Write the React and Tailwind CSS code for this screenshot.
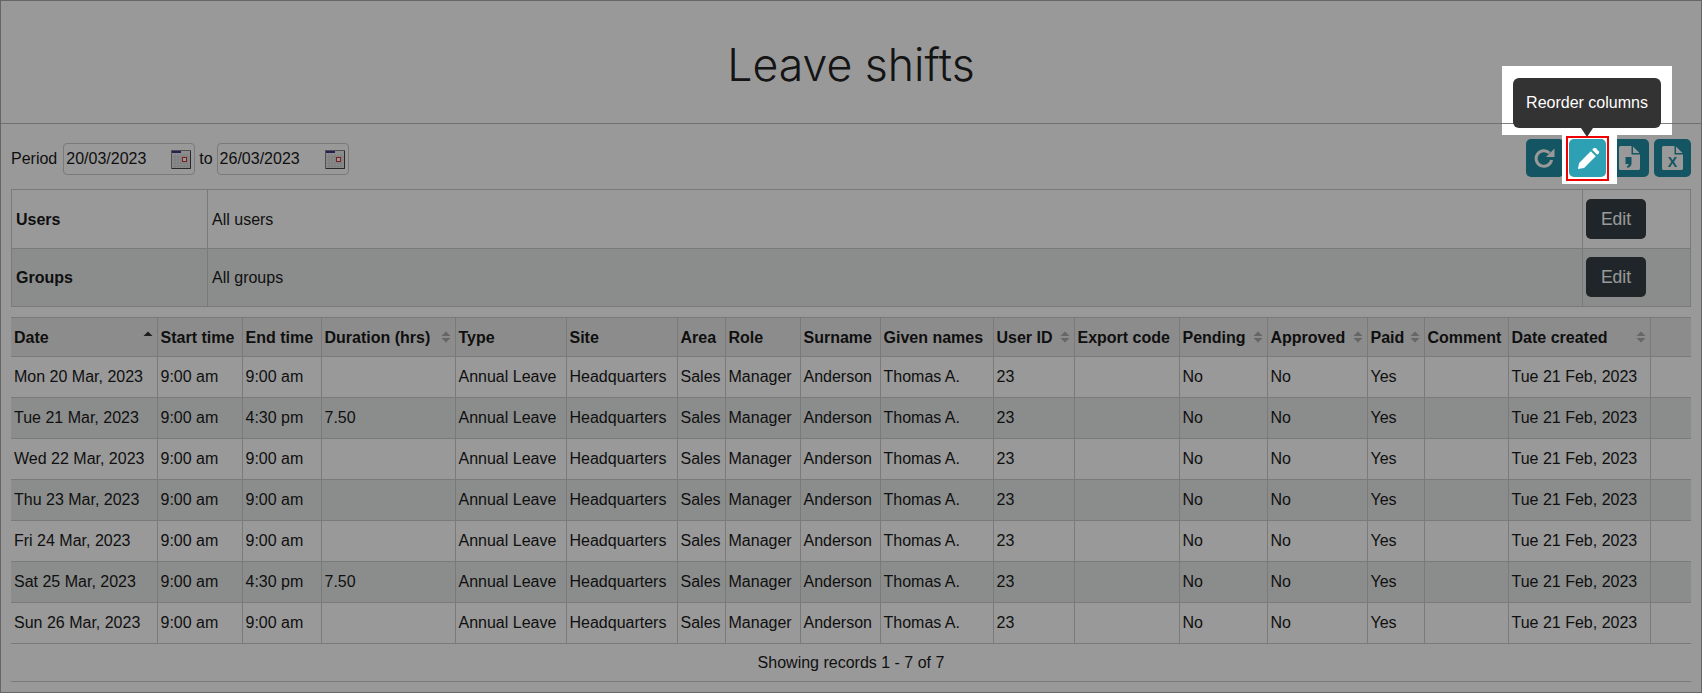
import React from 'react';

const widths = [146, 85, 79, 134, 111, 111, 48, 75, 80, 113, 81, 105, 88, 100, 57, 84, 142, 41];

const columns = [
    { label: 'Date', sort: 'asc' },
    { label: 'Start time' },
    { label: 'End time' },
    { label: 'Duration (hrs)', sort: 'both' },
    { label: 'Type' },
    { label: 'Site' },
    { label: 'Area' },
    { label: 'Role' },
    { label: 'Surname' },
    { label: 'Given names' },
    { label: 'User ID', sort: 'both' },
    { label: 'Export code' },
    { label: 'Pending', sort: 'both' },
    { label: 'Approved', sort: 'both' },
    { label: 'Paid', sort: 'both' },
    { label: 'Comment' },
    { label: 'Date created', sort: 'both' },
    { label: '' },
];

const rows = [
    ['Mon 20 Mar, 2023', '9:00 am', ''],
    ['Tue 21 Mar, 2023', '4:30 pm', '7.50'],
    ['Wed 22 Mar, 2023', '9:00 am', ''],
    ['Thu 23 Mar, 2023', '9:00 am', ''],
    ['Fri 24 Mar, 2023', '9:00 am', ''],
    ['Sat 25 Mar, 2023', '4:30 pm', '7.50'],
    ['Sun 26 Mar, 2023', '9:00 am', ''],
];

const SortArrows = ({ sort }) => (
    <svg width="10" height="12" viewBox="0 0 10 12" className="absolute right-[4px] top-1/2 -translate-y-1/2">
        <path d="M5 .5 9.5 5h-9z" fill={sort === 'asc' ? '#333' : '#aaa'} />
        {sort === 'both' && <path d="M5 11.5.5 7h9z" fill="#aaa" />}
    </svg>
);

const CalendarIcon = () => (
    <svg width="20" height="19" viewBox="0 0 20 19" className="shrink-0">
        <rect x="0.5" y="0.5" width="19" height="18" fill="#ececec" stroke="#888" />
        <path d="M19.5 1v17.5H1" fill="none" stroke="#444" />
        <rect x="1" y="1" width="9" height="2" fill="#3a3a90" />
        <path d="M1 7h18M1 10h18M1 13h18M1 16h18M4 4v14M7 4v14M10 4v14M13 4v14M16 4v14" stroke="#d0d0d0" />
        <rect x="11.5" y="7.5" width="4" height="4" fill="#fff" stroke="#c33" />
    </svg>
);

const DateField = ({ value }) => (
    <div className="flex items-center justify-between w-[132px] h-[32px] pl-[2px] pr-[3px] bg-white border border-[#ccc] rounded-[4px]">
        <span>{value}</span>
        <CalendarIcon />
    </div>
);

const ToolButton = ({ children }) => (
    <button className="flex items-center justify-center w-[37.5px] h-[38px] rounded-[5px] bg-[#218ea3] text-white">
        {children}
    </button>
);

const RedoIcon = () => (
    <svg width="21" height="20" viewBox="0 0 21 20">
        <path d="M15.5 5A7.8 7.8 0 1 0 17.6 12" fill="none" stroke="#fff" strokeWidth="3" />
        <path d="M20.5 .5v8.5h-8.5z" fill="#fff" />
    </svg>
);

const FileIcon = ({ children }) => (
    <svg width="21" height="24" viewBox="0 0 21 24">
        <path d="M1.5 0H12.5V8.5H21V22.5a1.5 1.5 0 0 1-1.5 1.5H1.5A1.5 1.5 0 0 1 0 22.5V1.5A1.5 1.5 0 0 1 1.5 0z" fill="#fff" />
        <path d="M14 .5 20.5 7H14z" fill="#fff" />
        {children}
    </svg>
);

const PencilIcon = () => (
    <svg width="23" height="23" viewBox="0 0 26 26" fill="#fff" className="ml-px">
        <path d="M1 25l1.4-7L15.6 4.8l5.6 5.6L8 23.6z" />
        <path d="M17.2 3.2l1.8-1.8a1.6 1.6 0 0 1 2.2 0l3.4 3.4a1.6 1.6 0 0 1 0 2.2L22.8 8.8z" />
    </svg>
);

const FilterRow = ({ label, value, shaded }) => (
    <tr className={shaded ? 'bg-[#e8ebea]' : ''}>
        <td className="w-[196px] border border-[#ccc] pl-[4px] pt-[2px] font-bold">{label}</td>
        <td className="border border-[#ccc] pl-[4px] pt-[2px]">{value}</td>
        <td className="w-[108px] border border-[#ccc] pl-[3px]">
            <button className="block w-[60px] h-[40px] rounded-[5px] bg-[#343f45] text-white text-[17.5px]">Edit</button>
        </td>
    </tr>
);

export default function App() {
    return (
        <div className="relative w-[1702px] h-[693px] overflow-hidden bg-white text-[#1a1a1a] text-[16px] font-['Liberation_Sans',sans-serif]">
            <div className="h-full border border-[#aaa]">
                <h1 className="flex items-center justify-center h-[123px] pt-[6px] border-b border-[#bbb] text-[44.6px] font-light font-['Inter',sans-serif] text-[#222]">
                    Leave shifts
                </h1>

                <div className="px-[10px]">
                    <div className="flex items-center justify-between h-[65px] pt-[5px]">
                        <div className="flex items-center">
                            <span className="mr-[6px] mb-px">Period</span>
                            <DateField value="20/03/2023" />
                            <span className="mx-[4px] mb-px">to</span>
                            <DateField value="26/03/2023" />
                        </div>
                        <div className="flex gap-[5px] mb-[2px]">
                            <ToolButton><RedoIcon /></ToolButton>
                            <ToolButton><PencilIcon /></ToolButton>
                            <ToolButton>
                                <FileIcon>
                                    <path d="M6.5 11h6v6.5c0 2.2-1.6 3.8-3.8 4.5l-1-1.5c1.2-.5 1.9-1.2 2-2.5H6.5z" fill="#218ea3" />
                                </FileIcon>
                            </ToolButton>
                            <ToolButton>
                                <FileIcon>
                                    <text x="10.5" y="21" fontSize="14" fontWeight="bold" textAnchor="middle" fill="#218ea3">X</text>
                                </FileIcon>
                            </ToolButton>
                        </div>
                    </div>

                    <table className="w-[1680px] h-[118px] border-collapse">
                        <tbody>
                            <FilterRow label="Users" value="All users" />
                            <FilterRow label="Groups" value="All groups" shaded />
                        </tbody>
                    </table>

                    <table className="mt-[10px] w-[1680px] table-fixed border-collapse">
                        <colgroup>
                            {widths.map((w, i) => <col key={i} style={{ width: w }} />)}
                        </colgroup>
                        <thead>
                            <tr className="h-[39px] bg-[#e9e9e9]">
                                {columns.map((c, i) => (
                                    <th key={i} className="relative border border-[#ccc] first:border-l-0 last:border-r-0 pl-[3px] pt-[2px] text-left font-bold whitespace-nowrap">
                                        {c.label}
                                        {c.sort && <SortArrows sort={c.sort} />}
                                    </th>
                                ))}
                            </tr>
                        </thead>
                        <tbody>
                            {rows.map(([date, end, duration], i) => {
                                const cells = [date, '9:00 am', end, duration, 'Annual Leave', 'Headquarters', 'Sales', 'Manager', 'Anderson', 'Thomas A.', '23', '', 'No', 'No', 'Yes', '', 'Tue 21 Feb, 2023', ''];
                                return (
                                    <tr key={date} className={`h-[41px] ${i % 2 ? 'bg-[#e8ebea]' : ''}`}>
                                        {cells.map((v, j) => (
                                            <td key={j} className="border border-[#ccc] first:border-l-0 last:border-r-0 pl-[3px] whitespace-nowrap">{v}</td>
                                        ))}
                                    </tr>
                                );
                            })}
                        </tbody>
                    </table>

                    <div className="flex items-center justify-center w-[1680px] h-[38px] border-b border-[#ccc]">
                        Showing records 1 - 7 of 7
                    </div>
                </div>
            </div>

            {/* tour overlay */}
            <div className="absolute inset-0 bg-black/40" />
            <div className="absolute left-[1502px] top-[66px] w-[170px] h-[69px] bg-white" />
            <div className="absolute left-[1562px] top-[135px] w-[55px] h-[49px] bg-white" />
            <div className="absolute left-[1502px] top-[123px] w-[170px] h-px bg-black/50" />
            <div className="absolute left-[1566px] top-[136px] w-[43px] h-[45px] pt-px border-[2px] border-[#f00000] flex justify-center">
                <div className="flex items-center justify-center w-[37px] h-[38px] rounded-[5px] bg-[#2ea0b3]">
                    <PencilIcon />
                </div>
            </div>
            <div className="absolute left-[1513px] top-[78px] w-[148px] h-[50px] flex items-center justify-center rounded-[6px] bg-[#333] text-white text-[16px]">
                Reorder columns
            </div>
            <div className="absolute left-[1581px] top-[128px] border-x-[6px] border-x-transparent border-t-[9px] border-t-[#333]" />
        </div>
    );
}
